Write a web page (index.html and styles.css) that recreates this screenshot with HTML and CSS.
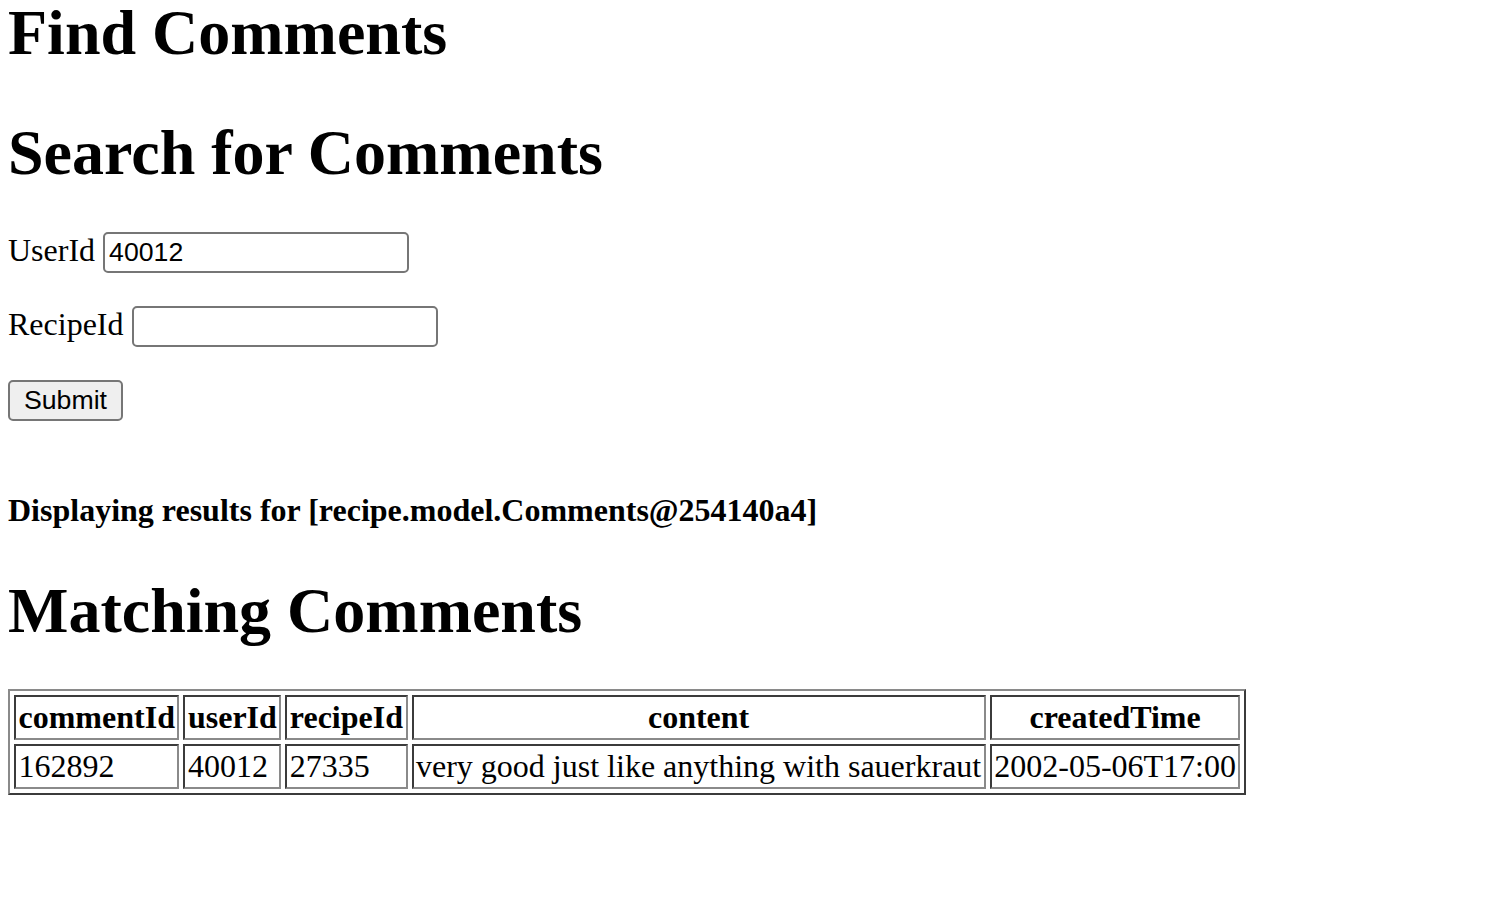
FILE: index.html
```html
<!DOCTYPE html>
<html>
<head>
<meta charset="utf-8">
<title>Find Comments</title>
<link rel="stylesheet" href="styles.css">
</head>
<body>
<h1 class="title">Find Comments</h1>
<form class="search-form">
  <h1 class="form-title">Search for Comments</h1>
  <p class="field">
    <label for="userid">UserId</label>
    <input id="userid" class="text-input" type="text" name="userid" value="40012">
  </p>
  <p class="field">
    <label for="recipeid">RecipeId</label>
    <input id="recipeid" class="text-input" type="text" name="recipeid" value="">
  </p>
  <p class="field">
    <button class="submit-btn" type="submit">Submit</button>
  </p>
</form>
<p class="results-note"><b>Displaying results for [recipe.model.Comments@254140a4]</b></p>
<h1 class="results-title">Matching Comments</h1>
<table class="results">
  <thead>
    <tr>
      <th>commentId</th>
      <th>userId</th>
      <th>recipeId</th>
      <th>content</th>
      <th>createdTime</th>
    </tr>
  </thead>
  <tbody>
    <tr>
      <td>162892</td>
      <td>40012</td>
      <td>27335</td>
      <td>very good just like anything with sauerkraut</td>
      <td>2002-05-06T17:00</td>
    </tr>
  </tbody>
</table>
</body>
</html>
```
FILE: styles.css
```css
html, body {
  background: #ffffff;
}
body {
  margin: 0 8px 8px 8px;
  font-family: "Liberation Serif", "Times New Roman", serif;
  font-size: 32px;
  color: #000000;
}
h1 {
  font-size: 64px;
  line-height: 77px;
  font-weight: bold;
  margin: 43px 0;
}
h1.title {
  margin-top: -6px;
}
h1.form-title {
  margin-bottom: 41px;
}
h1.results-title {
  margin-bottom: 40px;
}
.search-form {
  margin: 0;
}
.field {
  margin: 33px 0;
}
.text-input {
  box-sizing: border-box;
  width: 306px;
  height: 41px;
  font-family: "Liberation Sans", Arial, sans-serif;
  font-size: 26.67px;
  padding: 2px 4px;
  border: 2px solid #767676;
  border-radius: 5px;
  color: #000;
  background: #fff;
  vertical-align: baseline;
}
.submit-btn {
  box-sizing: border-box;
  height: 41px;
  font-family: "Liberation Sans", Arial, sans-serif;
  font-size: 26.67px;
  padding: 1px 14px;
  border: 2px solid #767676;
  border-radius: 5px;
  background: #efefef;
  color: #000;
}
.results-note {
  margin: 71px 0 43px 0;
}
.results {
  border-collapse: separate;
  border-spacing: 4px;
  border-width: 2px;
  border-style: solid;
  border-color: #8a8a8a #3b3b3b #3b3b3b #8a8a8a;
}
.results th,
.results td {
  padding: 2px 2.5px;
  border-width: 2px;
  border-style: solid;
  border-color: #3b3b3b #8a8a8a #8a8a8a #3b3b3b;
}
.results th {
  font-weight: bold;
  text-align: center;
}
.results td {
  text-align: left;
}
```
